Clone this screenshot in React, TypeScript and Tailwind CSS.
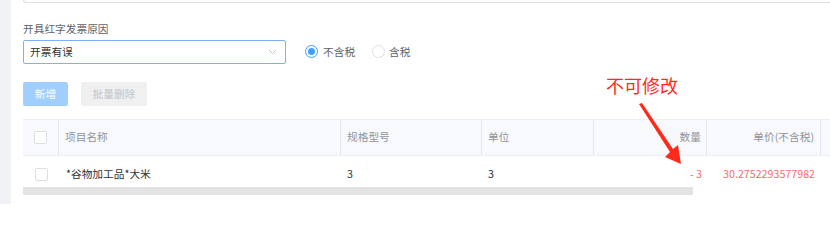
import React from "react";

const F = { fontFamily: '"Noto Sans CJK SC", "Noto Sans", sans-serif' };

function Checkbox() {
  return <div className="h-[13px] w-[13px] rounded-[2px] border border-[#dcdfe6] bg-white" />;
}

export default function App() {
  return (
    <div className="relative flex h-[204px] w-[830px] overflow-hidden bg-white text-[10.7px]" style={F}>
      <div className="w-[11px] shrink-0 bg-[#f0f2f5]" />
      <div className="flex min-w-0 flex-1 flex-col pl-[12px]">
        <div className="h-[3px] w-[900px] shrink-0 rounded-bl-[3px] border-b border-l border-[#dcdfe6]" />
        <div className="mt-[19px] leading-[14px] text-[#606266]">开具红字发票原因</div>
        <div className="mt-[4px] flex items-center">
          <div className="flex h-[24px] w-[263px] items-center justify-between rounded-[2px] border border-[#7fb0f7] pl-[6px] pr-[8px] text-[#303133]">
            <span>开票有误</span>
            <svg width="9" height="6" viewBox="0 0 9 6" fill="none">
              <path d="M1 1l3.5 3.5L8 1" stroke="#c0c4cc" strokeWidth="1" />
            </svg>
          </div>
          <div className="ml-[19px] flex items-center">
            <div className="flex h-[13px] w-[13px] items-center justify-center rounded-full border border-[#409eff] bg-white">
              <div className="h-[7px] w-[7px] rounded-full bg-[#409eff]" />
            </div>
            <span className="ml-[5px] text-[#606266]">不含税</span>
          </div>
          <div className="ml-[17px] flex items-center">
            <div className="h-[13px] w-[13px] rounded-full border border-[#dcdfe6] bg-white" />
            <span className="ml-[4px] text-[#606266]">含税</span>
          </div>
        </div>
        <div className="mt-[18px] flex items-center gap-[13px]">
          <div className="flex h-[24px] w-[45px] items-center justify-center rounded-[2px] bg-[#a0cfff] text-white">新增</div>
          <div className="flex h-[24px] w-[66px] items-center justify-center rounded-[2px] bg-[#f0f0f0] text-[#c0c4cc]">批量删除</div>
        </div>
        <div className="mt-[13px] w-[900px]">
          <div className="flex h-[37px] border-y border-[#ebeef5] bg-[#f8f9fc] text-[#909399]">
            <div className="flex w-[36px] items-center justify-center border-r border-[#e4e7ed]"><Checkbox /></div>
            <div className="flex w-[282px] items-center border-r border-[#e4e7ed] px-[6px]">项目名称</div>
            <div className="flex w-[141px] items-center border-r border-[#e4e7ed] px-[6px]">规格型号</div>
            <div className="flex w-[112px] items-center border-r border-[#e4e7ed] px-[6px]">单位</div>
            <div className="flex w-[113px] items-center justify-end border-r border-[#e4e7ed] px-[5px]">数量</div>
            <div className="flex w-[114px] items-center justify-end border-r border-[#e4e7ed] px-[6px]">单价(不含税)</div>
            <div className="flex-1" />
          </div>
          <div className="flex h-[31px] pt-[6px] text-[#303133]">
            <div className="flex w-[36px] items-center justify-center"><Checkbox /></div>
            <div className="flex w-[282px] items-center px-[7px]">*谷物加工品*大米</div>
            <div className="flex w-[141px] items-center px-[6px]">3</div>
            <div className="flex w-[112px] items-center px-[6px]">3</div>
            <div className="flex w-[113px] items-center justify-end px-[5px] text-[#f56c6c]">- 3</div>
            <div className="flex w-[114px] items-center justify-end px-[6px] text-[#f56c6c]">30.2752293577982</div>
          </div>
          <div className="h-[8px] w-[670px] bg-[#e3e3e3]" />
        </div>
      </div>
      <div className="absolute left-[606px] top-[73px] text-[18px] leading-[24px] text-[#ff2a1a]" style={F}>不可修改</div>
      <svg className="absolute left-0 top-0" width="830" height="204" viewBox="0 0 830 204">
        <polygon points="639,104 642,103 673,149 678,145 681,164 665,157 670,152" fill="#ff2a1a" />
      </svg>
    </div>
  );
}
